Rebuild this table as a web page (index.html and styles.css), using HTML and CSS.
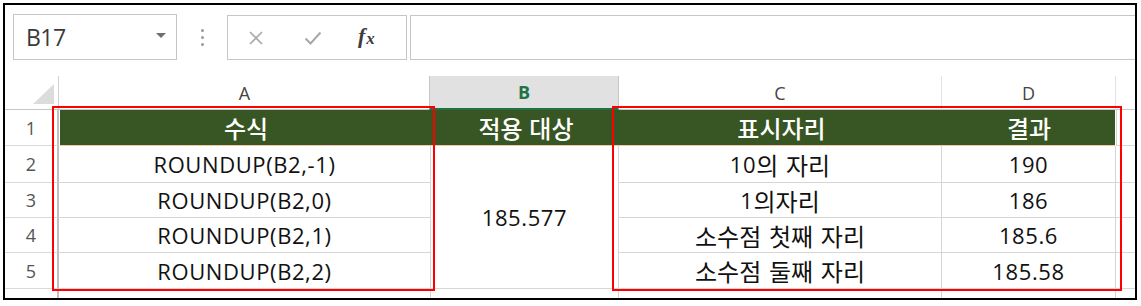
FILE: index.html
```html
<!DOCTYPE html>
<html lang="ko">
<head>
<meta charset="utf-8">
<link rel="stylesheet" href="styles.css">
</head>
<body>
<div class="frame">
  <div class="toolbar">
    <div class="namebox">
      <span class="ref">B17</span>
      <svg class="caret" width="10" height="5" viewBox="0 0 10 5"><path d="M0 0H10L5 5Z" fill="#6f6f6f"/></svg>
    </div>
    <div class="grip"><i></i><i></i><i></i></div>
    <div class="fxbox">
      <svg class="ico" width="16" height="16" viewBox="0 0 16 16"><path d="M2 2L14 14M14 2L2 14" stroke="#a8a8a8" stroke-width="1.6" fill="none"/></svg>
      <svg class="ico" width="18" height="16" viewBox="0 0 18 16"><path d="M1.5 8.5L6.5 13.5L16.5 2.5" stroke="#a8a8a8" stroke-width="2" fill="none"/></svg>
      <span class="fx"><i>f</i><i class="fx-x">x</i></span>
    </div>
    <div class="input"></div>
  </div>
  <div class="sheet">
    <div class="corner"><span class="tri"></span></div>
    <div class="ch">A</div>
    <div class="ch ch-sel">B</div>
    <div class="ch">C</div>
    <div class="ch">D</div>
    <div class="ch ch-e"></div>

    <div class="rh">1</div>
    <div class="hd">수식</div>
    <div class="hd">적용 대상</div>
    <div class="hd">표시자리</div>
    <div class="hd hd-last">결과</div>
    <div class="c e hdrow"></div>

    <div class="rh">2</div>
    <div class="c">ROUNDUP(B2,-1)</div>
    <div class="c merged">185.577</div>
    <div class="c">10<span class="ko">의 자리</span></div>
    <div class="c">190</div>
    <div class="c e"></div>

    <div class="rh">3</div>
    <div class="c">ROUNDUP(B2,0)</div>
    <div class="c">1<span class="ko">의자리</span></div>
    <div class="c">186</div>
    <div class="c e"></div>

    <div class="rh">4</div>
    <div class="c">ROUNDUP(B2,1)</div>
    <div class="c"><span class="ko">소수점 첫째 자리</span></div>
    <div class="c">185.6</div>
    <div class="c e"></div>

    <div class="rh">5</div>
    <div class="c">ROUNDUP(B2,2)</div>
    <div class="c"><span class="ko">소수점 둘째 자리</span></div>
    <div class="c">185.58</div>
    <div class="c e"></div>

    <div class="rh"></div>
    <div class="c"></div>
    <div class="c"></div>
    <div class="c"></div>
    <div class="c"></div>
    <div class="c e"></div>
  </div>
  <div class="mark mark-a"></div>
  <div class="mark mark-cd"></div>
</div>
</body>
</html>
```
FILE: styles.css
```css
* { box-sizing: border-box; }
html, body { margin: 0; padding: 0; background: #fff; }
body { width: 1141px; height: 306px; overflow: hidden; }

.frame {
  position: relative;
  margin: 3px 0 0 3px;
  width: 1134px;
  height: 297px;
  border: 2px solid #000;
  overflow: hidden;
  font-family: "Open Sans", "Noto Sans CJK KR", sans-serif;
}

.toolbar {
  display: flex;
  align-items: stretch;
  height: 71px;
  padding: 9px 0 0 8px;
}
.namebox {
  width: 164px;
  height: 46px;
  border: 1px solid #c6c6c6;
  display: flex;
  align-items: center;
  justify-content: space-between;
  padding: 0 10px 0 12px;
}
.ref {
  font-family: "Open Sans", sans-serif;
  font-size: 23px;
  color: #3a3a3a;
  letter-spacing: -0.5px;
}
.caret { margin-top: -4px; }
.grip {
  width: 50px;
  height: 46px;
  display: flex;
  flex-direction: column;
  align-items: center;
  justify-content: center;
  gap: 4px;
}
.grip i { width: 3px; height: 3px; background: #9a9a9a; border-radius: 50%; }
.fxbox {
  width: 180px;
  height: 45px;
  margin-top: 1px;
  border: 1px solid #c6c6c6;
  display: flex;
  align-items: center;
  padding-left: 20px;
}
.fxbox .ico:nth-child(1) { margin-right: 40px; }
.fxbox .ico:nth-child(2) { margin-right: 36px; }
.fx {
  font-family: "Liberation Serif", serif;
  font-weight: bold;
  color: #3c3c3c;
  font-size: 22px;
  margin-top: -4px;
}
.fx-x { font-size: 17px; position: relative; top: 1px; margin-left: 1px; }
.input {
  flex: 1;
  height: 45px;
  margin-top: 1px;
  margin-left: 3px;
  border: 1px solid #c6c6c6;
  border-right: none;
}

.sheet {
  display: grid;
  grid-template-columns: 54px 372px 188px 323px 174px 40px;
  grid-template-rows: 34px 36px 37px 35px 35px 36px 30px;
}
.corner {
  border-right: 1px solid #d0d0d0;
  border-bottom: 1px solid #c8c8c8;
  position: relative;
}
.tri {
  position: absolute;
  right: 4px;
  bottom: 5px;
  width: 0; height: 0;
  border-left: 21px solid transparent;
  border-bottom: 20px solid #dcdcdc;
}
.ch {
  display: flex;
  align-items: center;
  justify-content: center;
  font-size: 18px;
  color: #444;
  border-right: 1px solid #e3e3e3;
  border-bottom: 1px solid #c8c8c8;
}
.ch-sel {
  background: #e1e1e1;
  color: #217346;
  font-weight: bold;
  border-left: 1px solid #c6c6c6;
  border-right: 1px solid #c6c6c6;
  border-bottom: 2px solid #217346;
  margin-left: -2px;
}
.ch-e { border-right: none; }
.rh {
  display: flex;
  align-items: center;
  justify-content: center;
  font-size: 18px;
  color: #555;
  border-right: 2px solid #c0c0c0;
  border-bottom: 1px solid #dadada;
}
.hd {
  background: #375623;
  color: #fff;
  font-family: "Noto Sans CJK KR", sans-serif;
  font-size: 24px;
  font-weight: 500;
  display: flex;
  align-items: center;
  justify-content: center;
  border-bottom: 1px solid #f4c7a6;
  margin-left: 1px;
  margin-right: -1px;
}
.hd-last { margin-right: 1px; }
.c {
  display: flex;
  align-items: center;
  justify-content: center;
  font-size: 22px;
  letter-spacing: 0.6px;
  color: #111;
  border-right: 1px solid #d6d6d6;
  border-bottom: 1px solid #d6d6d6;
  white-space: nowrap;
}
.ko {
  font-family: "Noto Sans CJK KR", sans-serif;
  font-size: 24px;
  letter-spacing: 0;
  word-spacing: 1px;
}
.hdrow { border-left: 1px solid #d6d6d6; }
.c.e { border-right: none; }
.merged { grid-row: span 4; }

.mark {
  position: absolute;
  border: 2px solid #ff0000;
  top: 101px;
  height: 185px;
}
.mark-a { left: 47px; width: 383px; }
.mark-cd { left: 607px; width: 510px; }
```
